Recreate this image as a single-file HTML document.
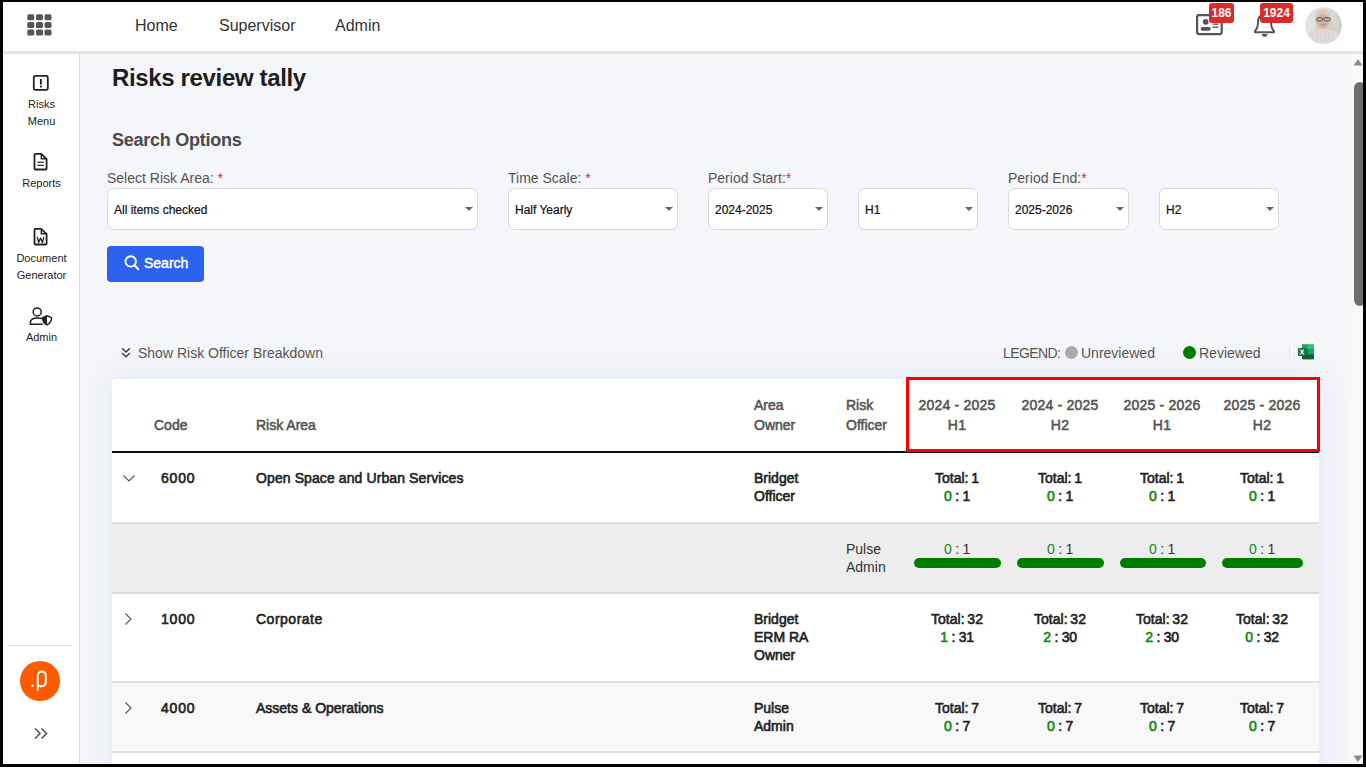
<!DOCTYPE html>
<html><head><meta charset="utf-8">
<style>
*{box-sizing:border-box;margin:0;padding:0}
html,body{width:1366px;height:768px;overflow:hidden;background:#000}
body{font-family:"Liberation Sans",sans-serif;position:relative;color:#222}
.a{position:absolute}
svg{display:block}
#hdr{left:3px;top:2px;width:1360px;height:49px;background:#fff}
#hbar{left:3px;top:51px;width:1360px;height:3px;background:#e4e4e4}
#side{left:3px;top:54px;width:77px;height:710px;background:#fff;border-right:1px solid #dedede}
#main{left:80px;top:54px;width:1271px;height:710px;background:#f5f6f9}
#track{left:1351px;top:54px;width:12px;height:710px;background:#f9f9f9}
#thumb{left:1354px;top:82px;width:12px;height:224px;background:#6e6e6e;border-radius:6px}
.nav{font-size:16px;color:#333;top:16px;line-height:20px}
.side-t{font-size:11px;color:#222;text-align:center;width:77px;left:3px;line-height:17px}
.lbl{font-size:14px;color:#555;line-height:16px}
.lbl i{font-style:normal;color:#d9302c}
.sel{height:42px;background:#fff;border:1px solid #d9d9d9;border-radius:7px;top:188px;font-size:12px;color:#111;line-height:42px;padding-left:6px;-webkit-text-stroke:0.2px #111}
.sel:after{content:"";position:absolute;right:4px;top:18px;border-left:4px solid transparent;border-right:4px solid transparent;border-top:4.5px solid #666}
#card{left:112px;top:379px;width:1207px;height:420px;background:#fff;border-radius:4px;box-shadow:0 0 28px 4px rgba(70,100,210,0.09)}
.th{font-size:14px;color:#555;font-weight:normal;-webkit-text-stroke:0.55px #555;line-height:20px}
.td{font-size:14px;color:#222;font-weight:normal;-webkit-text-stroke:0.6px #222;line-height:18px}
.ctr{text-align:center;width:100px}
.g{color:#138a13;-webkit-text-stroke-color:#138a13}
.tt{letter-spacing:0px}
.rt{letter-spacing:-0.3px}
.bar{height:10px;background:#007d00;border-radius:5px;top:558px}
</style></head><body>
<div id="hdr" class="a"></div>
<div id="hbar" class="a"></div>
<div id="side" class="a"></div>
<div id="main" class="a"></div>
<div id="track" class="a"></div>
<div id="thumb" class="a"></div>
<svg class="a" style="left:1353px;top:58px" width="10" height="8" viewBox="0 0 10 8"><path d="M5 1 L9.5 7.5 L0.5 7.5 Z" fill="#8a8a8a"/></svg>
<svg class="a" style="left:1353px;top:755px" width="10" height="8" viewBox="0 0 10 8"><path d="M5 7 L9.5 0.5 L0.5 0.5 Z" fill="#8a8a8a"/></svg>


<!-- grid icon -->
<svg class="a" style="left:27px;top:14px" width="26" height="22" viewBox="0 0 26 22">
<g fill="#555">
<rect x="0.3" y="0.3" width="7" height="6" rx="1.6"/><rect x="9" y="0.3" width="7" height="6" rx="1.6"/><rect x="17.5" y="0.3" width="7" height="6" rx="1.6"/>
<rect x="0.3" y="8" width="7" height="6" rx="1.6"/><rect x="9" y="8" width="7" height="6" rx="1.6"/><rect x="17.5" y="8" width="7" height="6" rx="1.6"/>
<rect x="0.3" y="15.5" width="7" height="6" rx="1.6"/><rect x="9" y="15.5" width="7" height="6" rx="1.6"/><rect x="17.5" y="15.5" width="7" height="6" rx="1.6"/>
</g></svg>

<!-- id card -->
<svg class="a" style="left:1196px;top:14px" width="28" height="22" viewBox="0 0 28 22">
<rect x="1.1" y="1.1" width="24.6" height="19" rx="2" fill="none" stroke="#555" stroke-width="2.2"/>
<circle cx="9.7" cy="7.8" r="2.9" fill="#555"/>
<rect x="4.6" y="13.1" width="10.2" height="3.7" rx="1.8" fill="#555"/>
<rect x="16.6" y="9.5" width="5.8" height="1.3" fill="#555"/>
<rect x="16.6" y="12.5" width="5.8" height="1.3" fill="#555"/>
</svg>
<div class="a" style="left:1209px;top:3px;width:25px;height:20px;border-radius:3px;background:#d92b2b;color:#fff;font-size:12px;font-weight:bold;line-height:20px;text-align:center">186</div>

<!-- bell -->
<svg class="a" style="left:1253px;top:12px" width="24" height="26" viewBox="0 0 24 26">
<path d="M11 3 C6 3 5 7 5 10 C5 14 4.5 16.5 2 19 L2 20.3 L21 20.3 L21 19 C18.5 16.5 18 14 18 10 C18 7 17 3 11 3 Z" fill="none" stroke="#555" stroke-width="2" stroke-linejoin="round"/>
<path d="M8.7 22 L14.6 22 C14 24 13 24.8 11.6 24.8 C10.3 24.8 9.3 24 8.7 22 Z" fill="#555"/>
</svg>
<div class="a" style="left:1260px;top:3px;width:33px;height:20px;border-radius:3px;background:#d92b2b;color:#fff;font-size:12px;font-weight:bold;line-height:20px;text-align:center">1924</div>

<!-- avatar -->
<svg class="a" style="left:1305px;top:7px" width="37" height="37" viewBox="0 0 37 37">
<defs><clipPath id="cav"><circle cx="18.5" cy="18.5" r="18.3"/></clipPath>
<linearGradient id="bgav" x1="0" y1="0" x2="1" y2="0"><stop offset="0" stop-color="#e2e4e0"/><stop offset="0.6" stop-color="#dfe0dc"/><stop offset="1" stop-color="#c9cbc8"/></linearGradient>
<filter id="blav" x="-20%" y="-20%" width="140%" height="140%" filterUnits="objectBoundingBox"><feGaussianBlur stdDeviation="0.5"/></filter></defs>
<g clip-path="url(#cav)">
<rect width="37" height="37" fill="url(#bgav)"/>
<g filter="url(#blav)">
<path d="M10 13 C9.5 5 13.5 2.5 18 2.5 C23 2.5 27 5 27 12 L27.5 19 C29 21 31 22.5 33 24 L26 25 L10.5 24 C11 20 10.3 17 10 13 Z" fill="#dad0b8"/>
<ellipse cx="18.2" cy="14" rx="6.2" ry="7.6" fill="#d3b5a2"/>
<rect x="11.6" y="10.6" width="6" height="3.4" rx="1.3" fill="#c8ab9b" stroke="#4a4240" stroke-width="0.8"/><rect x="19" y="10.6" width="6" height="3.4" rx="1.3" fill="#c8ab9b" stroke="#4a4240" stroke-width="0.8"/>
<ellipse cx="18.3" cy="17.4" rx="2.6" ry="0.9" fill="#b98a8e"/>
<path d="M0 37 L1 27 C5 24 11 22.2 18 22.2 C25 22.2 31 24 35 27 L37 37 Z" fill="#e0d8da"/>
<path d="M8 26 L8.5 37 M12 24.5 L12.5 37 M16 23.5 L16 37 M20 23.5 L20.5 37 M24 24 L24.5 37 M28 25 L29 37" stroke="#cdc3c6" stroke-width="0.6" opacity="0.6"/>
</g></g></svg>

<!-- sidebar icons -->
<svg class="a" style="left:32px;top:74px" width="18" height="18" viewBox="0 0 18 18">
<rect x="1.8" y="1.9" width="14" height="14" rx="1.5" fill="none" stroke="#222" stroke-width="1.8"/>
<rect x="7.9" y="5" width="1.9" height="5.6" fill="#222"/><circle cx="8.85" cy="12.6" r="1.05" fill="#222"/>
</svg>
<div class="a side-t" style="top:96px">Risks<br>Menu</div>

<svg class="a" style="left:33px;top:152px" width="16" height="20" viewBox="0 0 16 20">
<path d="M2.5 1.8 L8.3 1.8 L13.6 7.2 L13.6 16.4 C13.6 17 13.2 17.5 12.6 17.5 L2.5 17.5 C1.9 17.5 1.5 17 1.5 16.4 L1.5 2.8 C1.5 2.2 1.9 1.8 2.5 1.8 Z" fill="none" stroke="#222" stroke-width="1.8" stroke-linejoin="round"/>
<path d="M8.3 1.8 L8.3 6.7 L13.6 6.7" fill="none" stroke="#222" stroke-width="1.4"/>
<rect x="4.3" y="9.7" width="6.5" height="1.2" fill="#222"/><rect x="4.3" y="12.7" width="6.5" height="1.2" fill="#222"/>
</svg>
<div class="a side-t" style="top:175px">Reports</div>

<svg class="a" style="left:33px;top:227px" width="16" height="20" viewBox="0 0 16 20">
<path d="M2.5 1.8 L8.3 1.8 L13.6 7.2 L13.6 16.4 C13.6 17 13.2 17.5 12.6 17.5 L2.5 17.5 C1.9 17.5 1.5 17 1.5 16.4 L1.5 2.8 C1.5 2.2 1.9 1.8 2.5 1.8 Z" fill="none" stroke="#222" stroke-width="1.8" stroke-linejoin="round"/>
<path d="M8.3 1.8 L8.3 6.7 L13.6 6.7" fill="none" stroke="#222" stroke-width="1.4"/>
<path d="M4.2 9.8 L5.6 15.6 L7.5 11 L9.4 15.6 L10.9 9.8" fill="none" stroke="#222" stroke-width="1.3" stroke-linejoin="round"/>
</svg>
<div class="a side-t" style="top:250px">Document<br>Generator</div>

<svg class="a" style="left:28px;top:305px" width="26" height="22" viewBox="0 0 26 22">
<circle cx="9.2" cy="6.9" r="4" fill="none" stroke="#222" stroke-width="1.5"/>
<path d="M15 13.5 C13.8 13.4 12.5 13.1 9.5 13.1 C5 13.1 2.4 14.8 2.4 17.5 L2.4 19.2 L14.8 19.2" fill="none" stroke="#222" stroke-width="1.5"/>
<path d="M19 10.8 L23.6 12.6 C23.6 16.5 22 18.7 19 19.8 C16 18.7 14.6 16.5 14.6 12.6 Z" fill="none" stroke="#222" stroke-width="1.5" stroke-linejoin="round"/>
<path d="M19 10.8 L14.6 12.6 C14.6 16.5 16 18.7 19 19.8 Z" fill="#222"/>
</svg>
<div class="a side-t" style="top:329px">Admin</div>

<div class="a" style="left:8px;top:645px;width:64px;height:1px;background:#ddd"></div>
<svg class="a" style="left:20px;top:661px" width="40" height="40" viewBox="0 0 40 40">
<circle cx="20" cy="20" r="20" fill="#ff5a00"/>
<path d="M17.7 29.7 L17.7 15.2 C17.7 12.3 19.3 10.5 21.7 10.5 C24.2 10.5 25.8 12.3 25.8 15.2 L25.8 20.6 C25.8 23.6 24.2 25.3 21.7 25.3 C20.7 25.3 19.9 25.1 19.2 24.6" fill="none" stroke="#fff" stroke-width="2"/>
<circle cx="12.3" cy="24.8" r="1.2" fill="#fff"/>
</svg>
<svg class="a" style="left:34px;top:727px" width="15" height="13" viewBox="0 0 15 13">
<path d="M1 1.5 L6 6.5 L1 11.5 M7.5 1.5 L12.5 6.5 L7.5 11.5" fill="none" stroke="#555" stroke-width="1.6"/>
</svg>

<!-- header -->
<div class="a nav" style="left:135px">Home</div>
<div class="a nav" style="left:219px">Supervisor</div>
<div class="a nav" style="left:335px">Admin</div>

<!-- title -->
<div class="a" style="left:112px;top:64px;font-size:24px;font-weight:bold;color:#1e1e1e;letter-spacing:-0.35px">Risks review tally</div>
<div class="a" style="left:112px;top:130px;font-size:18px;font-weight:bold;color:#4a4a4a;letter-spacing:-0.25px">Search Options</div>

<div class="a lbl" style="left:107px;top:170px">Select Risk Area: <i>*</i></div>
<div class="a lbl" style="left:508px;top:170px">Time Scale: <i>*</i></div>
<div class="a lbl" style="left:708px;top:170px">Period Start:<i>*</i></div>
<div class="a lbl" style="left:1008px;top:170px">Period End:<i>*</i></div>

<div class="a sel" style="left:107px;width:371px">All items checked</div>
<div class="a sel" style="left:508px;width:170px">Half Yearly</div>
<div class="a sel" style="left:708px;width:120px">2024-2025</div>
<div class="a sel" style="left:858px;width:120px">H1</div>
<div class="a sel" style="left:1008px;width:121px">2025-2026</div>
<div class="a sel" style="left:1159px;width:120px">H2</div>

<div class="a" style="left:107px;top:246px;width:97px;height:36px;background:#2b63f0;border-radius:4px"></div>
<svg class="a" style="left:123px;top:254px" width="18" height="18" viewBox="0 0 18 18"><circle cx="7.7" cy="7.4" r="5.2" fill="none" stroke="#fff" stroke-width="1.9"/><path d="M11.5 11.3 L15.3 15.2" stroke="#fff" stroke-width="2" stroke-linecap="round"/></svg>
<div class="a" style="left:144px;top:255px;font-size:14px;color:#fff;line-height:16px;-webkit-text-stroke:0.45px #fff">Search</div>

<div id="card" class="a"></div>

<!-- legend row -->
<div class="a" style="left:121px;top:347px;width:10px;height:12px">
<svg width="10" height="12" viewBox="0 0 10 12"><path d="M1.2 1.3 L5 5 L8.8 1.3 M1.2 6 L5 9.7 L8.8 6" fill="none" stroke="#3a3a3a" stroke-width="1.4"/></svg></div>
<div class="a" style="left:138px;top:345px;font-size:14px;color:#555;line-height:16px">Show Risk Officer Breakdown</div>
<div class="a" style="left:1003px;top:345px;font-size:14px;color:#555;line-height:16px;letter-spacing:-0.6px">LEGEND:</div>
<div class="a" style="left:1065px;top:346px;width:13px;height:13px;border-radius:50%;background:#aaa"></div>
<div class="a" style="left:1081px;top:345px;font-size:14px;color:#555;line-height:16px">Unreviewed</div>
<div class="a" style="left:1183px;top:346px;width:13px;height:13px;border-radius:50%;background:#007d00"></div>
<div class="a" style="left:1199px;top:345px;font-size:14px;color:#555;line-height:16px">Reviewed</div>
<div class="a" style="left:1289px;top:346px;width:1px;height:13px;background:#e2e2e2"></div>
<svg class="a" style="left:1298px;top:344px" width="17" height="16" viewBox="0 0 17 16">
<rect x="4" y="0.6" width="12" height="14.6" rx="0.8" fill="#107c41"/>
<rect x="10" y="0.6" width="6" height="4.8" fill="#33c481"/>
<rect x="4" y="0.6" width="6" height="4.8" fill="#21a366"/>
<rect x="10" y="5.4" width="6" height="5" fill="#21a366"/>
<rect x="4" y="10.4" width="12" height="4.8" rx="0.8" fill="#185c37"/>
<rect x="0" y="3.9" width="8" height="8.1" rx="0.6" fill="#107c41"/>
<path d="M2.2 5.6 L5.8 10.3 M5.8 5.6 L2.2 10.3" stroke="#fff" stroke-width="1.1"/>
</svg>

<!-- table header -->
<div class="a" style="left:112px;top:451px;width:1207px;height:2px;background:#111"></div>
<div class="a th" style="left:154px;top:415px">Code</div>
<div class="a th" style="left:256px;top:415px">Risk Area</div>
<div class="a th" style="left:754px;top:395px">Area<br>Owner</div>
<div class="a th" style="left:846px;top:395px">Risk<br>Officer</div>
<div class="a th ctr" style="left:907px;top:395px;letter-spacing:0.2px">2024 - 2025<br>H1</div>
<div class="a th ctr" style="left:1010px;top:395px;letter-spacing:0.2px">2024 - 2025<br>H2</div>
<div class="a th ctr" style="left:1112px;top:395px;letter-spacing:0.2px">2025 - 2026<br>H1</div>
<div class="a th ctr" style="left:1212px;top:395px;letter-spacing:0.2px">2025 - 2026<br>H2</div>
<div class="a" style="left:906px;top:377px;width:414px;height:75px;border:3px solid #f00"></div>

<!-- rows -->
<div class="a" style="left:112px;top:453px;width:1207px;height:70px;background:#fff"></div>
<div class="a" style="left:112px;top:522px;width:1207px;height:2px;background:#dcdcdc"></div>
<div class="a" style="left:112px;top:524px;width:1207px;height:68px;background:#ededed"></div>
<div class="a" style="left:112px;top:592px;width:1207px;height:2px;background:#d9d9d9"></div>
<div class="a" style="left:112px;top:594px;width:1207px;height:87px;background:#fff"></div>
<div class="a" style="left:112px;top:681px;width:1207px;height:2px;background:#e0e0e0"></div>
<div class="a" style="left:112px;top:683px;width:1207px;height:68px;background:#f8f8f8"></div>
<div class="a" style="left:112px;top:751px;width:1207px;height:2px;background:#e0e0e0"></div>
<div class="a" style="left:112px;top:753px;width:1207px;height:20px;background:#fff"></div>

<div class="a" style="left:122px;top:473px;width:14px;height:10px"><svg width="14" height="10" viewBox="0 0 14 10"><path d="M1.5 2.5 L7 8 L12.5 2.5" fill="none" stroke="#555" stroke-width="1.1"/></svg></div>
<div class="a td" style="left:161px;top:469px;letter-spacing:0.8px">6000</div>
<div class="a td" style="left:256px;top:469px;letter-spacing:0.1px">Open Space and Urban Services</div>
<div class="a td" style="left:754px;top:469px">Bridget<br>Officer</div>
<div class="a td ctr" style="left:907px;top:469px"><span class="tt">Total:&#8201;1</span><br><span class="g">0</span><span class="rt"> : 1</span></div>
<div class="a td ctr" style="left:1010px;top:469px"><span class="tt">Total:&#8201;1</span><br><span class="g">0</span><span class="rt"> : 1</span></div>
<div class="a td ctr" style="left:1112px;top:469px"><span class="tt">Total:&#8201;1</span><br><span class="g">0</span><span class="rt"> : 1</span></div>
<div class="a td ctr" style="left:1212px;top:469px"><span class="tt">Total:&#8201;1</span><br><span class="g">0</span><span class="rt"> : 1</span></div>

<div class="a td" style="left:846px;top:540px;-webkit-text-stroke:0;color:#333">Pulse<br>Admin</div>
<div class="a td ctr" style="left:907px;top:540px;-webkit-text-stroke:0;color:#333"><span class="g">0</span><span class="rt"> : 1</span></div>
<div class="a td ctr" style="left:1010px;top:540px;-webkit-text-stroke:0;color:#333"><span class="g">0</span><span class="rt"> : 1</span></div>
<div class="a td ctr" style="left:1112px;top:540px;-webkit-text-stroke:0;color:#333"><span class="g">0</span><span class="rt"> : 1</span></div>
<div class="a td ctr" style="left:1212px;top:540px;-webkit-text-stroke:0;color:#333"><span class="g">0</span><span class="rt"> : 1</span></div>
<div class="a bar" style="left:914px;width:87px"></div>
<div class="a bar" style="left:1017px;width:87px"></div>
<div class="a bar" style="left:1120px;width:86px"></div>
<div class="a bar" style="left:1222px;width:81px"></div>

<div class="a" style="left:123px;top:612px;width:10px;height:14px"><svg width="10" height="14" viewBox="0 0 10 14"><path d="M2.5 1.5 L8 7 L2.5 12.5" fill="none" stroke="#555" stroke-width="1.1"/></svg></div>
<div class="a td" style="left:161px;top:610px;letter-spacing:0.8px">1000</div>
<div class="a td" style="left:256px;top:610px;letter-spacing:0.5px">Corporate</div>
<div class="a td" style="left:754px;top:610px">Bridget<br>ERM RA<br>Owner</div>
<div class="a td ctr" style="left:907px;top:610px"><span class="tt">Total:&#8201;32</span><br><span class="g">1</span><span class="rt"> : 31</span></div>
<div class="a td ctr" style="left:1010px;top:610px"><span class="tt">Total:&#8201;32</span><br><span class="g">2</span><span class="rt"> : 30</span></div>
<div class="a td ctr" style="left:1112px;top:610px"><span class="tt">Total:&#8201;32</span><br><span class="g">2</span><span class="rt"> : 30</span></div>
<div class="a td ctr" style="left:1212px;top:610px"><span class="tt">Total:&#8201;32</span><br><span class="g">0</span><span class="rt"> : 32</span></div>

<div class="a" style="left:123px;top:701px;width:10px;height:14px"><svg width="10" height="14" viewBox="0 0 10 14"><path d="M2.5 1.5 L8 7 L2.5 12.5" fill="none" stroke="#555" stroke-width="1.1"/></svg></div>
<div class="a td" style="left:161px;top:699px;letter-spacing:0.8px">4000</div>
<div class="a td" style="left:256px;top:699px">Assets &amp; Operations</div>
<div class="a td" style="left:754px;top:699px">Pulse<br>Admin</div>
<div class="a td ctr" style="left:907px;top:699px"><span class="tt">Total:&#8201;7</span><br><span class="g">0</span><span class="rt"> : 7</span></div>
<div class="a td ctr" style="left:1010px;top:699px"><span class="tt">Total:&#8201;7</span><br><span class="g">0</span><span class="rt"> : 7</span></div>
<div class="a td ctr" style="left:1112px;top:699px"><span class="tt">Total:&#8201;7</span><br><span class="g">0</span><span class="rt"> : 7</span></div>
<div class="a td ctr" style="left:1212px;top:699px"><span class="tt">Total:&#8201;7</span><br><span class="g">0</span><span class="rt"> : 7</span></div>

<!-- frame -->
<div class="a" style="left:0;top:0;width:1366px;height:2px;background:#000"></div>
<div class="a" style="left:0;top:0;width:3px;height:768px;background:#000"></div>
<div class="a" style="left:1363px;top:0;width:3px;height:768px;background:#000"></div>
<div class="a" style="left:0;top:764px;width:1366px;height:3px;background:#000"></div>
<div class="a" style="left:0;top:767px;width:1366px;height:1px;background:#fff"></div>
</body></html>
